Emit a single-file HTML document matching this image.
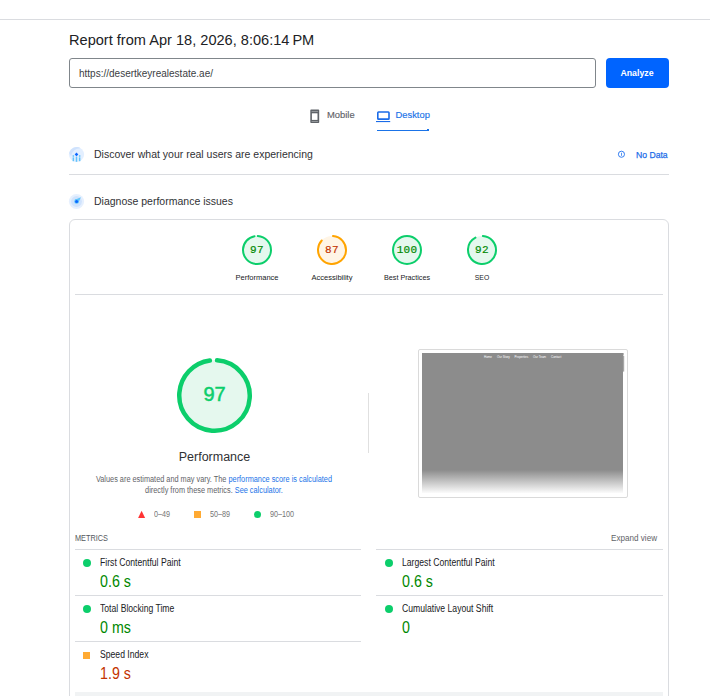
<!DOCTYPE html>
<html><head><meta charset="utf-8">
<style>
html,body{margin:0;padding:0;background:#fff;width:710px;height:696px;overflow:hidden;position:relative;font-family:"Liberation Sans",sans-serif;}
.a{position:absolute;white-space:nowrap;line-height:1;}
.hr{position:absolute;height:1px;background:#dadce0;}
.mono{font-family:"Liberation Mono",monospace;}
</style></head><body>

<div class="hr" style="left:0;top:19px;width:710px;"></div>

<div class="a" style="left:69px;top:31.8px;font-size:15px;color:#202124;transform:scaleX(0.972);transform-origin:0 0;">Report from Apr 18, 2026, 8:06:14&#8239;PM</div>

<div style="position:absolute;left:69px;top:58px;width:525px;height:28px;border:1px solid #80868b;border-radius:3px;"></div>
<div class="a" style="left:79px;top:68.5px;font-size:10px;color:#3c4043;">https://desertkeyrealestate.ae/</div>

<div style="position:absolute;left:606px;top:58px;width:63px;height:30px;background:#0064ff;border-radius:4px;"></div>
<div class="a" style="left:606px;top:68.5px;width:62px;text-align:center;font-size:8.8px;font-weight:bold;color:#fff;">Analyze</div>

<!-- tabs -->
<svg style="position:absolute;left:309px;top:109px" width="12" height="15" viewBox="0 0 12 15">
  <rect x="1.3" y="0.6" width="8.9" height="13.5" rx="0.8" fill="#5f6368"/>
  <rect x="2.9" y="4.3" width="5.6" height="6.6" fill="#fff"/>
  <rect x="2.6" y="2.3" width="6.3" height="0.6" fill="#b8babd"/>
  <rect x="2.6" y="12.1" width="6.3" height="0.6" fill="#b8babd"/>
</svg>
<div class="a" style="left:327px;top:110px;font-size:9.4px;color:#5f6368;-webkit-text-stroke:0.15px #5f6368;">Mobile</div>
<svg style="position:absolute;left:375px;top:110px" width="17" height="14" viewBox="0 0 17 14">
  <rect x="2.8" y="2.05" width="11.2" height="7.1" rx="0.7" fill="none" stroke="#1a6be8" stroke-width="1.6"/>
  <rect x="1" y="11" width="14.2" height="1.1" fill="#1a6be8"/>
</svg>
<div class="a" style="left:395.5px;top:110px;font-size:9.4px;color:#1a73e8;-webkit-text-stroke:0.15px #1a73e8;">Desktop</div>
<div style="position:absolute;left:377px;top:130px;width:52px;height:1px;background:#1a73e8;"></div><div style="position:absolute;left:377px;top:129.5px;width:1px;height:1.5px;background:#1a73e8;"></div><div style="position:absolute;left:427px;top:129px;width:2px;height:2px;background:#1a73e8;"></div>

<!-- discover -->
<svg style="position:absolute;left:68px;top:146px" width="17" height="17" viewBox="0 0 17 17">
  <circle cx="8.5" cy="8.5" r="7.6" fill="#e3efff"/>
  <path d="M1.2 7.2 A7.6 7.6 0 0 1 12.6 2.2 A9 9 0 0 0 3.2 10.2 Z" fill="#cfe2fd"/>
  <rect x="4.6" y="9.2" width="1.5" height="1.6" fill="#63c3fb"/>
  <rect x="4.6" y="11.4" width="1.5" height="3.8" fill="#63c3fb"/>
  <rect x="10.9" y="9.2" width="1.5" height="1.6" fill="#63c3fb"/>
  <rect x="10.9" y="11.4" width="1.5" height="3.8" fill="#63c3fb"/>
  <rect x="7.75" y="10.6" width="1.5" height="5.2" fill="#63c3fb"/>
  <path d="M8.5 6.6 L10.3 8.4 L8.5 10.2 L6.7 8.4 Z" fill="#0b66ff"/>
</svg>
<div class="a" style="left:94px;top:149px;font-size:10.5px;color:#303134;">Discover what your real users are experiencing</div>
<svg style="position:absolute;left:617px;top:150px" width="9" height="9" viewBox="0 0 9 9">
  <circle cx="4.45" cy="4.25" r="3.05" fill="none" stroke="#2a78f0" stroke-width="0.95"/>
  <rect x="4.05" y="2.6" width="0.8" height="3.3" rx="0.4" fill="#2a78f0"/>
</svg>
<div class="a" style="left:636px;top:149.8px;font-size:9.8px;color:#1a6be8;transform:scaleX(0.88);transform-origin:0 0;-webkit-text-stroke:0.25px #1a6be8;">No Data</div>
<div class="hr" style="left:69px;top:174px;width:600px;"></div>

<!-- diagnose -->
<svg style="position:absolute;left:68px;top:193px" width="17" height="17" viewBox="0 0 17 17">
  <circle cx="8.5" cy="8.5" r="7.6" fill="#e6f0fe"/>
  <circle cx="8.5" cy="8.5" r="5.4" fill="#d0e3fd"/>
  <circle cx="8.6" cy="8.4" r="2.3" fill="#5cc4fb"/>
  <path d="M7.0 6.7 L12.9 4.3 L10.2 10.1 Z" fill="#5cc4fb"/>
  <circle cx="8.6" cy="8.4" r="1.5" fill="#0b66ff"/>
</svg>
<div class="a" style="left:94px;top:196px;font-size:10.5px;color:#303134;">Diagnose performance issues</div>

<!-- card -->
<div style="position:absolute;left:69px;top:219px;width:598px;height:600px;border:1px solid #dadce0;border-radius:6px;"></div>


<!-- small gauges -->
<svg style="position:absolute;left:241px;top:234px" width="32" height="32"><circle cx="16" cy="16" r="14.000" fill="#e5f8ee"/><circle cx="16" cy="16" r="14.000" fill="none" stroke="#0cce6b" stroke-width="2" stroke-linecap="round" stroke-dasharray="84.132 87.965" transform="rotate(-86.907 16 16)"/></svg>
<svg style="position:absolute;left:316px;top:234px" width="32" height="32"><circle cx="16" cy="16" r="14.000" fill="#fff5e6"/><circle cx="16" cy="16" r="14.000" fill="none" stroke="#ffa400" stroke-width="2" stroke-linecap="round" stroke-dasharray="74.969 87.965" transform="rotate(-85.907 16 16)"/></svg>
<svg style="position:absolute;left:391px;top:234px" width="32" height="32"><circle cx="16" cy="16" r="14.000" fill="#e5f8ee"/><circle cx="16" cy="16" r="14.000" fill="none" stroke="#0cce6b" stroke-width="2"/></svg>
<svg style="position:absolute;left:466px;top:234px" width="32" height="32"><circle cx="16" cy="16" r="14.000" fill="#e5f8ee"/><circle cx="16" cy="16" r="14.000" fill="none" stroke="#0cce6b" stroke-width="2" stroke-linecap="round" stroke-dasharray="79.734 87.965" transform="rotate(-86.407 16 16)"/></svg>
<div class="a mono" style="left:217px;top:245px;width:80px;text-align:center;font-size:11px;letter-spacing:0.3px;-webkit-text-stroke:0.2px currentColor;color:#008800;">97</div>
<div class="a mono" style="left:292px;top:245px;width:80px;text-align:center;font-size:11px;letter-spacing:0.3px;-webkit-text-stroke:0.2px currentColor;color:#c33300;">87</div>
<div class="a mono" style="left:367px;top:245px;width:80px;text-align:center;font-size:11px;letter-spacing:0.3px;-webkit-text-stroke:0.2px currentColor;color:#008800;">100</div>
<div class="a mono" style="left:442px;top:245px;width:80px;text-align:center;font-size:11px;letter-spacing:0.3px;-webkit-text-stroke:0.2px currentColor;color:#008800;">92</div>
<div class="a" style="left:217px;top:273.5px;width:80px;text-align:center;font-size:8px;color:#202124;transform:scaleX(0.94);transform-origin:50% 0;">Performance</div>
<div class="a" style="left:292px;top:273.5px;width:80px;text-align:center;font-size:8px;color:#202124;transform:scaleX(0.94);transform-origin:50% 0;">Accessibility</div>
<div class="a" style="left:367px;top:273.5px;width:80px;text-align:center;font-size:8px;color:#202124;transform:scaleX(0.9);transform-origin:50% 0;">Best Practices</div>
<div class="a" style="left:442px;top:273.5px;width:80px;text-align:center;font-size:8px;color:#202124;transform:scaleX(0.85);transform-origin:50% 0;">SEO</div>
<div class="hr" style="left:75px;top:294px;width:588px;"></div>

<!-- big gauge -->
<svg style="position:absolute;left:176.0px;top:356.5px" width="77.0" height="77.0"><circle cx="38.5" cy="38.5" r="35.250" fill="#e5f8ee"/><circle cx="38.5" cy="38.5" r="35.250" fill="none" stroke="#0cce6b" stroke-width="4.5" stroke-linecap="round" stroke-dasharray="213.906 221.482" transform="rotate(-85.843 38.5 38.5)"/></svg>
<div class="a" style="left:114.5px;top:384px;width:200px;text-align:center;font-size:20px;color:#0cce6b;-webkit-text-stroke:0.5px #0cce6b;">97</div>
<div class="a" style="left:114.5px;top:451px;width:200px;text-align:center;font-size:12.5px;color:#303134;">Performance</div>
<div class="a" style="left:64px;top:474.5px;width:300px;text-align:center;font-size:8.5px;color:#5f6368;transform:scaleX(0.863);transform-origin:50% 0;">Values are estimated and may vary. The <span style="color:#1a73e8">performance score is calculated</span></div>
<div class="a" style="left:64px;top:486px;width:300px;text-align:center;font-size:8.5px;color:#5f6368;transform:scaleX(0.863);transform-origin:50% 0;">directly from these metrics. <span style="color:#1a73e8">See calculator.</span></div>

<!-- legend -->
<svg style="position:absolute;left:137px;top:510px" width="10" height="9"><path d="M4.6 0.8 L8.1 8 L1.1 8 Z" fill="#ff3333"/></svg>
<div class="a" style="left:154px;top:509.8px;font-size:8.5px;color:#757575;transform:scaleX(0.85);transform-origin:0 0;">0–49</div>
<div style="position:absolute;left:194px;top:511px;width:7px;height:7px;background:#ffaa33;"></div>
<div class="a" style="left:210px;top:509.8px;font-size:8.5px;color:#757575;transform:scaleX(0.85);transform-origin:0 0;">50–89</div>
<div style="position:absolute;left:254px;top:511px;width:7px;height:7px;border-radius:50%;background:#0cce6b;"></div>
<div class="a" style="left:270px;top:509.8px;font-size:8.5px;color:#757575;transform:scaleX(0.85);transform-origin:0 0;">90–100</div>

<div style="position:absolute;left:368px;top:393px;width:1px;height:60px;background:#e0e0e0;"></div>

<!-- thumbnail -->
<div style="position:absolute;left:418px;top:349px;width:208px;height:147px;border:1px solid #dadada;border-radius:2px;background:#fff;"></div>
<div style="position:absolute;left:422px;top:353px;width:200.6px;height:140px;background:linear-gradient(to bottom,#8c8c8c 0px,#8c8c8c 117px,#fbfbfb 140px);"></div>
<svg style="position:absolute;left:620px;top:352px" width="6" height="24">
  <rect x="2.6" y="1" width="1.0" height="2.6" fill="#8e8e8e"/>
  <rect x="2.9" y="4" width="1.3" height="15.6" fill="#a6a6a6"/>
</svg>
<div style="position:absolute;left:483px;top:356px;font-size:3px;line-height:3px;color:#ffffff;white-space:nowrap;">
<span style="position:absolute;left:1px">Home</span><span style="position:absolute;left:14px">Our Story</span><span style="position:absolute;left:31.5px">Properties</span><span style="position:absolute;left:50px">Our Team</span><span style="position:absolute;left:68px">Contact</span></div>

<!-- metrics -->
<div class="a" style="left:75px;top:534.4px;font-size:9px;color:#54585c;transform:scaleX(0.815);transform-origin:0 0;">METRICS</div>
<div class="a" style="left:557px;top:533.8px;width:100px;text-align:right;font-size:8.5px;color:#5f6368;transform:scaleX(0.954);transform-origin:100% 0;">Expand view</div>

<div class="hr" style="left:75px;top:549px;width:286px;"></div>
<div class="hr" style="left:376px;top:549px;width:287px;"></div>
<div class="hr" style="left:75px;top:595px;width:286px;"></div>
<div class="hr" style="left:376px;top:595px;width:287px;"></div>
<div class="hr" style="left:75px;top:641px;width:286px;"></div>

<div style="position:absolute;left:83px;top:559px;width:8px;height:8px;border-radius:50%;background:#0cce6b;"></div>
<div class="a" style="left:100px;top:558.3px;font-size:10px;color:#202124;transform:scaleX(0.863);transform-origin:0 0;">First Contentful Paint</div>
<div class="a" style="left:100px;top:573.7px;font-size:16px;color:#008800;transform:scaleX(0.89);transform-origin:0 0;">0.6 s</div>
<div style="position:absolute;left:385px;top:559px;width:8px;height:8px;border-radius:50%;background:#0cce6b;"></div>
<div class="a" style="left:401.5px;top:558.3px;font-size:10px;color:#202124;transform:scaleX(0.863);transform-origin:0 0;">Largest Contentful Paint</div>
<div class="a" style="left:401.5px;top:573.7px;font-size:16px;color:#008800;transform:scaleX(0.89);transform-origin:0 0;">0.6 s</div>
<div style="position:absolute;left:83px;top:605px;width:8px;height:8px;border-radius:50%;background:#0cce6b;"></div>
<div class="a" style="left:100px;top:604.3px;font-size:10px;color:#202124;transform:scaleX(0.863);transform-origin:0 0;">Total Blocking Time</div>
<div class="a" style="left:100px;top:619.7px;font-size:16px;color:#008800;transform:scaleX(0.89);transform-origin:0 0;">0 ms</div>
<div style="position:absolute;left:385px;top:605px;width:8px;height:8px;border-radius:50%;background:#0cce6b;"></div>
<div class="a" style="left:401.5px;top:604.3px;font-size:10px;color:#202124;transform:scaleX(0.863);transform-origin:0 0;">Cumulative Layout Shift</div>
<div class="a" style="left:401.5px;top:619.7px;font-size:16px;color:#008800;transform:scaleX(0.89);transform-origin:0 0;">0</div>
<div style="position:absolute;left:83px;top:652px;width:7px;height:7px;background:#ffaa33;"></div>
<div class="a" style="left:100px;top:650.3px;font-size:10px;color:#202124;transform:scaleX(0.863);transform-origin:0 0;">Speed Index</div>
<div class="a" style="left:100px;top:665.7px;font-size:16px;color:#c33300;transform:scaleX(0.89);transform-origin:0 0;">1.9 s</div>

<div style="position:absolute;left:75px;top:692px;width:588px;height:10px;background:#f1f3f4;"></div>

</body></html>
